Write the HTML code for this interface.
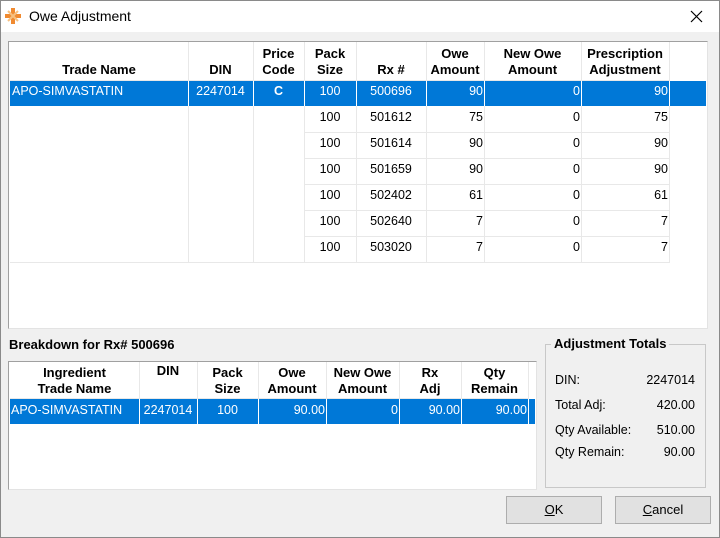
<!DOCTYPE html>
<html><head><style>
*{box-sizing:border-box;margin:0;padding:0}
body{width:720px;height:538px;position:relative;background:#f0f0f0;font-family:"Liberation Sans",sans-serif;font-size:12.5px;color:#000;overflow:hidden}
.a{position:absolute}
.win{left:0;top:0;width:720px;height:538px;border:1px solid #8a8a8a}
.title{left:1px;top:1px;width:718px;height:31px;background:#fff}
.grid{background:#fff;border-top:1px solid #a0a0a0;border-left:1px solid #a0a0a0;border-right:1px solid #e3e3e3;border-bottom:1px solid #e3e3e3}
.h{font-weight:bold;font-size:13px;text-align:center;line-height:16px;display:flex;align-items:flex-end;justify-content:center}
.c{line-height:20px;white-space:nowrap}
.vl{width:1px;background:#e8e8e8}
.hl{height:1px;background:#e8e8e8}
.sel{background:#0078d7;color:#fff}
.btn{border:1px solid #adadad;background:#e1e1e1;text-align:center;line-height:25px;font-size:13px}
</style></head><body>
<div class="a win"></div>
<div class="a title"></div>
<svg class="a" style="left:4px;top:7px" width="18" height="18" viewBox="0 0 18 18"><path d="M9 1v16M1 9h16" stroke="#f08a30" stroke-width="4"/><path d="M4 4l10 10M14 4L4 14" stroke="#f6c080" stroke-width="2"/></svg>
<div class="a" style="left:29px;top:8px;font-size:14px">Owe Adjustment</div>
<svg class="a" style="left:690px;top:10px" width="13" height="13"><path d="M1 1L12 12M12 1L1 12" stroke="#000" stroke-width="1.2"/></svg>

<div class="a grid" style="left:8px;top:41px;width:700px;height:288px"></div>
<div class="a sel" style="left:10px;top:81px;width:696px;height:25px"></div>
<div class="a h" style="left:10px;top:42px;width:178px;height:36px">Trade Name</div>
<div class="a h" style="left:188px;top:42px;width:65px;height:36px">DIN</div>
<div class="a h" style="left:253px;top:42px;width:51px;height:36px">Price<br>Code</div>
<div class="a h" style="left:304px;top:42px;width:52px;height:36px">Pack<br>Size</div>
<div class="a h" style="left:356px;top:42px;width:70px;height:36px">Rx #</div>
<div class="a h" style="left:426px;top:42px;width:58px;height:36px">Owe<br>Amount</div>
<div class="a h" style="left:484px;top:42px;width:97px;height:36px">New Owe<br>Amount</div>
<div class="a h" style="left:581px;top:42px;width:88px;height:36px">Prescription<br>Adjustment</div>
<div class="a vl" style="left:188px;top:42px;height:221px"></div>
<div class="a vl" style="left:253px;top:42px;height:221px"></div>
<div class="a vl" style="left:304px;top:42px;height:221px"></div>
<div class="a vl" style="left:356px;top:42px;height:221px"></div>
<div class="a vl" style="left:426px;top:42px;height:221px"></div>
<div class="a vl" style="left:484px;top:42px;height:221px"></div>
<div class="a vl" style="left:581px;top:42px;height:221px"></div>
<div class="a vl" style="left:669px;top:42px;height:221px"></div>
<div class="a hl" style="left:10px;top:80px;width:660px"></div>
<div class="a hl" style="left:304px;top:132px;width:366px"></div>
<div class="a hl" style="left:304px;top:158px;width:366px"></div>
<div class="a hl" style="left:304px;top:184px;width:366px"></div>
<div class="a hl" style="left:304px;top:210px;width:366px"></div>
<div class="a hl" style="left:304px;top:236px;width:366px"></div>
<div class="a hl" style="left:10px;top:262px;width:660px"></div>
<div class="a vl" style="left:188px;top:81px;height:25px;background:#fff"></div>
<div class="a vl" style="left:253px;top:81px;height:25px;background:#fff"></div>
<div class="a vl" style="left:304px;top:81px;height:25px;background:#fff"></div>
<div class="a vl" style="left:356px;top:81px;height:25px;background:#fff"></div>
<div class="a vl" style="left:426px;top:81px;height:25px;background:#fff"></div>
<div class="a vl" style="left:484px;top:81px;height:25px;background:#fff"></div>
<div class="a vl" style="left:581px;top:81px;height:25px;background:#fff"></div>
<div class="a vl" style="left:669px;top:81px;height:25px;background:#fff"></div>
<div class="a c" style="left:12px;top:81px;color:#fff">APO-SIMVASTATIN</div>
<div class="a c" style="left:188px;top:81px;width:65px;text-align:center;color:#fff">2247014</div>
<div class="a c" style="left:253px;top:81px;width:51px;text-align:center;color:#fff;font-weight:bold">C</div>
<div id="rows"></div>
<script>
var d=[["500696",90],["501612",75],["501614",90],["501659",90],["502402",61],["502640",7],["503020",7]],h="";
d.forEach(function(r,i){var y=81+i*26,col=i==0?"color:#fff;":"";
h+='<div class="a c" style="'+col+'left:304px;top:'+y+'px;width:52px;text-align:center">100</div>';
h+='<div class="a c" style="'+col+'left:356px;top:'+y+'px;width:70px;text-align:center">'+r[0]+'</div>';
h+='<div class="a c" style="'+col+'left:426px;top:'+y+'px;width:57px;text-align:right">'+r[1]+'</div>';
h+='<div class="a c" style="'+col+'left:484px;top:'+y+'px;width:96px;text-align:right">0</div>';
h+='<div class="a c" style="'+col+'left:581px;top:'+y+'px;width:87px;text-align:right">'+r[1]+'</div>';});
document.getElementById("rows").outerHTML=h;
</script>

<div class="a" style="left:9px;top:337px;font-weight:bold;font-size:13px">Breakdown for Rx# 500696</div>
<div class="a grid" style="left:8px;top:361px;width:529px;height:129px"></div>
<div class="a sel" style="left:10px;top:399px;width:525px;height:25px"></div>
<div class="a h" style="left:10px;top:363px;width:129px;height:34px">Ingredient<br>Trade Name</div>
<div class="a h" style="left:139px;top:363px;width:58px;height:34px;align-items:flex-start">DIN</div>
<div class="a h" style="left:197px;top:363px;width:61px;height:34px">Pack<br>Size</div>
<div class="a h" style="left:258px;top:363px;width:68px;height:34px">Owe<br>Amount</div>
<div class="a h" style="left:326px;top:363px;width:73px;height:34px">New Owe<br>Amount</div>
<div class="a h" style="left:399px;top:363px;width:62px;height:34px">Rx<br>Adj</div>
<div class="a h" style="left:461px;top:363px;width:67px;height:34px">Qty<br>Remain</div>
<div class="a vl" style="left:139px;top:362px;height:37px"></div>
<div class="a vl" style="left:197px;top:362px;height:37px"></div>
<div class="a vl" style="left:258px;top:362px;height:37px"></div>
<div class="a vl" style="left:326px;top:362px;height:37px"></div>
<div class="a vl" style="left:399px;top:362px;height:37px"></div>
<div class="a vl" style="left:461px;top:362px;height:37px"></div>
<div class="a vl" style="left:528px;top:362px;height:37px"></div>
<div class="a hl" style="left:10px;top:398px;width:519px"></div>
<div class="a vl" style="left:139px;top:399px;height:25px;background:#fff"></div>
<div class="a vl" style="left:197px;top:399px;height:25px;background:#fff"></div>
<div class="a vl" style="left:258px;top:399px;height:25px;background:#fff"></div>
<div class="a vl" style="left:326px;top:399px;height:25px;background:#fff"></div>
<div class="a vl" style="left:399px;top:399px;height:25px;background:#fff"></div>
<div class="a vl" style="left:461px;top:399px;height:25px;background:#fff"></div>
<div class="a vl" style="left:528px;top:399px;height:25px;background:#fff"></div>
<div class="a c" style="left:11px;top:400px;color:#fff">APO-SIMVASTATIN</div>
<div class="a c" style="left:139px;top:400px;width:58px;text-align:center;color:#fff">2247014</div>
<div class="a c" style="left:197px;top:400px;width:61px;text-align:center;color:#fff">100</div>
<div class="a c" style="left:258px;top:400px;width:67px;text-align:right;color:#fff">90.00</div>
<div class="a c" style="left:326px;top:400px;width:72px;text-align:right;color:#fff">0</div>
<div class="a c" style="left:399px;top:400px;width:61px;text-align:right;color:#fff">90.00</div>
<div class="a c" style="left:461px;top:400px;width:66px;text-align:right;color:#fff">90.00</div>

<div class="a" style="left:545px;top:344px;width:161px;height:144px;border:1px solid #c8c8c8"></div>
<div class="a" style="left:551px;top:336px;background:#f0f0f0;padding:0 3px;font-weight:bold;font-size:13px">Adjustment Totals</div>
<div class="a" style="left:555px;top:372px;width:140px;line-height:16px"><span>DIN:</span><span style="float:right">2247014</span></div>
<div class="a" style="left:555px;top:397px;width:140px;line-height:16px"><span>Total Adj:</span><span style="float:right">420.00</span></div>
<div class="a" style="left:555px;top:422px;width:140px;line-height:16px"><span>Qty Available:</span><span style="float:right">510.00</span></div>
<div class="a" style="left:555px;top:444px;width:140px;line-height:16px"><span>Qty Remain:</span><span style="float:right">90.00</span></div>

<div class="a btn" style="left:506px;top:496px;width:96px;height:28px"><u>O</u>K</div>
<div class="a btn" style="left:615px;top:496px;width:96px;height:28px"><u>C</u>ancel</div>
</body></html>
